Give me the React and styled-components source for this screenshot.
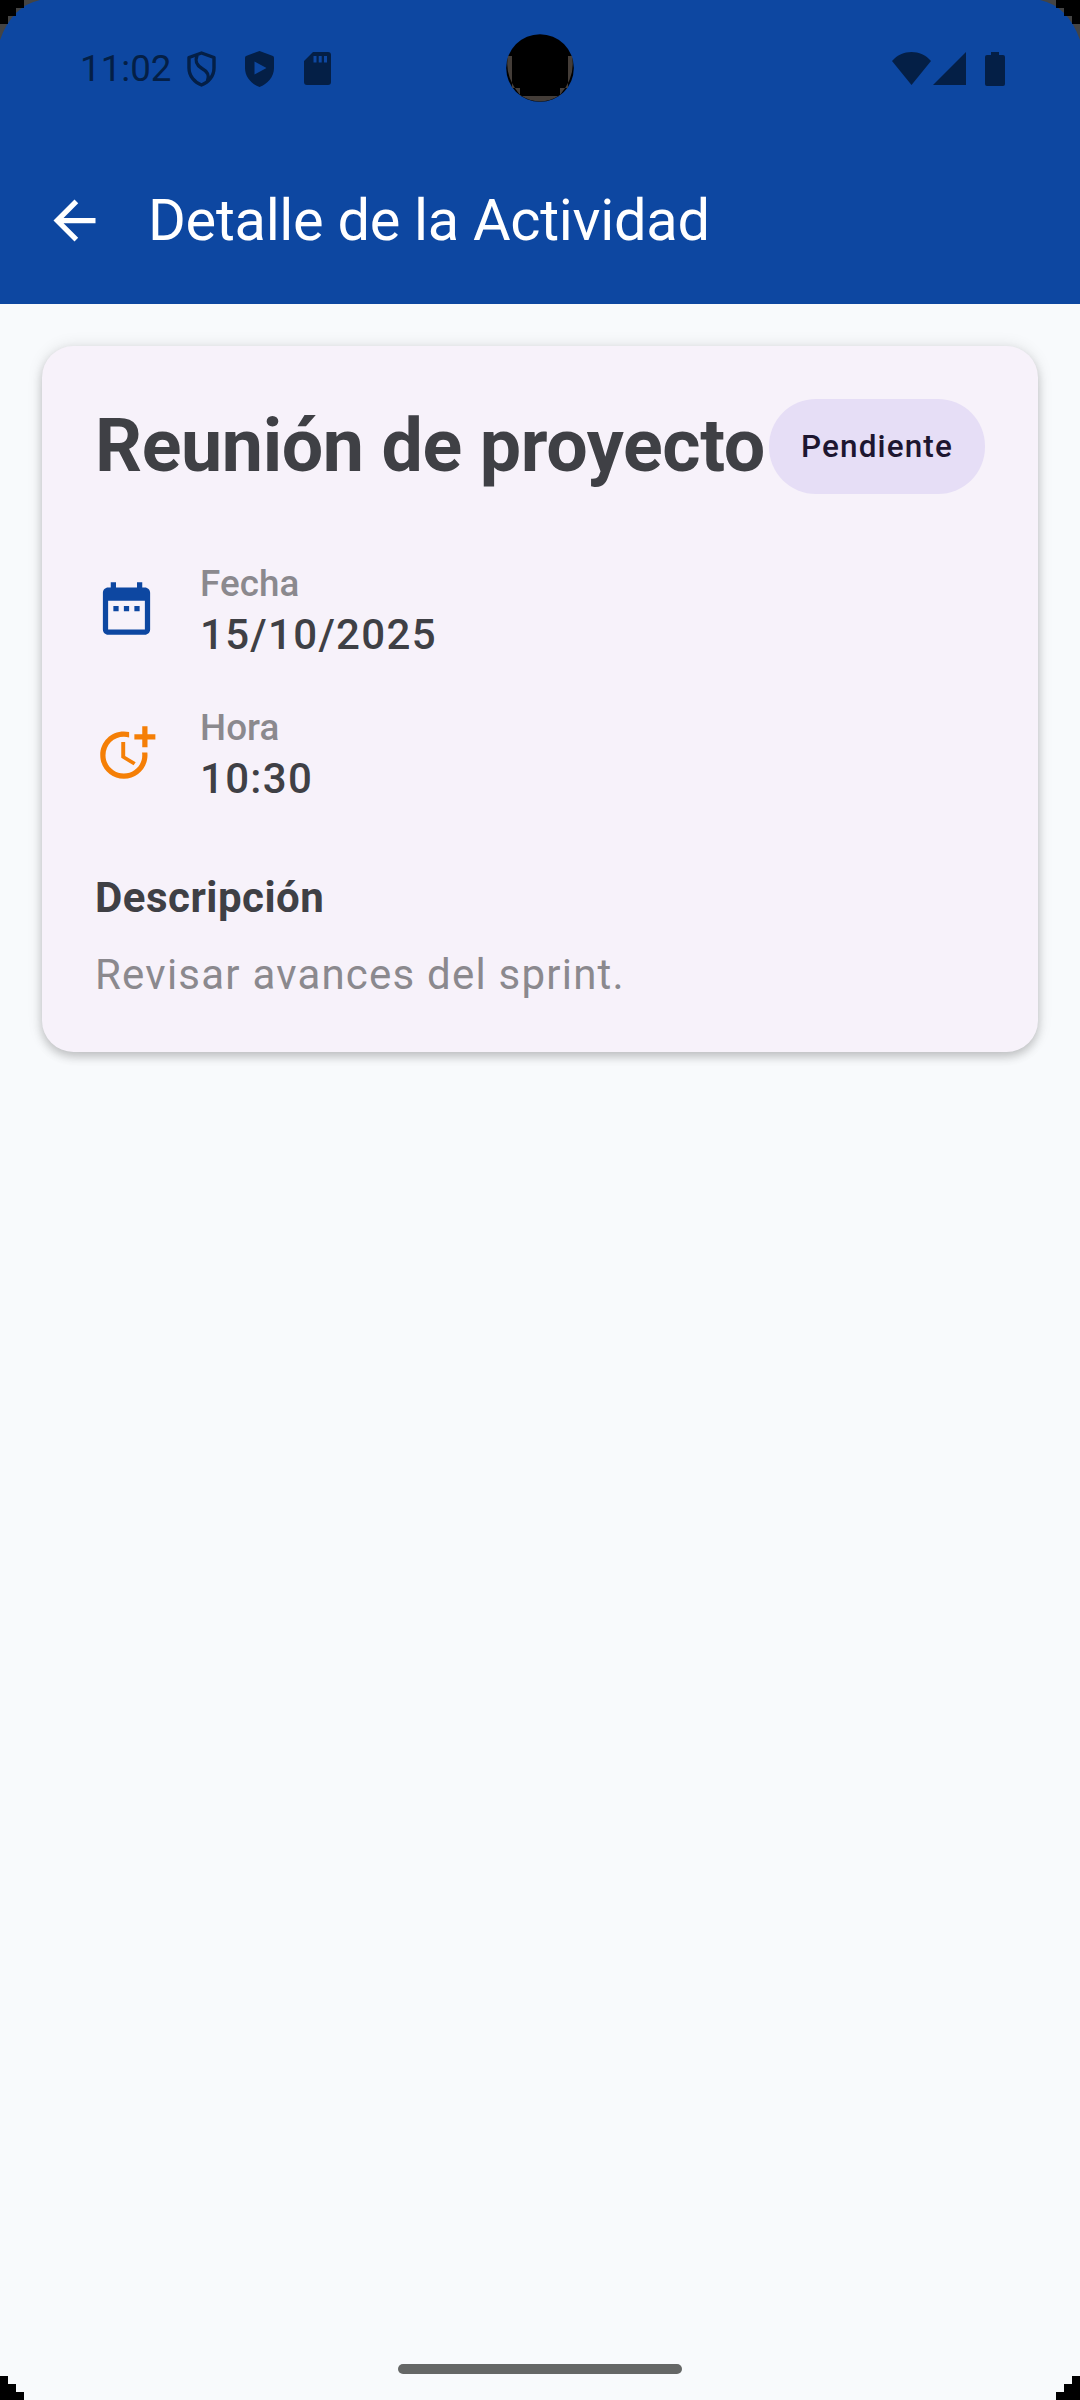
import React from "react";
import styled, { createGlobalStyle } from "styled-components";

const GlobalStyle = createGlobalStyle`
  * { box-sizing: border-box; }
  html, body { margin: 0; padding: 0; background: #f8fafc; }
  body { font-family: Roboto, "Noto Sans", sans-serif; }
  h1, h2, p { margin: 0; }
`;

const Screen = styled.div`
  position: relative;
  width: 1080px;
  height: 2400px;
  display: flex;
  flex-direction: column;
  background: #f8fafc;
  overflow: hidden;
`;

const StatusBar = styled.header`
  height: 136px;
  padding: 1px 75px 0 80px;
  display: flex;
  align-items: center;
  justify-content: space-between;
  background: #0d47a1;
  color: #041f46;
`;

const StatusGroup = styled.div`
  display: flex;
  align-items: center;
`;

const Clock = styled.span`
  width: 107px;
  font-size: 36.75px;
  line-height: 44px;
  white-space: nowrap;
`;

const StatusIcon = styled.svg`
  display: block;
  flex: none;
  margin-left: ${(p) => p.$gap || 0}px;
`;

const AppBar = styled.div`
  height: 168px;
  padding: 1px 42.5px 0;
  display: flex;
  align-items: center;
  gap: 42.5px;
  background: #0d47a1;
  color: #fff;
`;

const AppTitle = styled.h1`
  font-size: 57.75px;
  font-weight: 400;
  line-height: 73.5px;
  letter-spacing: -0.3px;
  white-space: nowrap;
`;

const Icon = styled.svg`
  display: block;
  flex: none;
  width: 63px;
  height: 63px;
  fill: ${(p) => p.$color};
`;

const Content = styled.main`
  flex: 1;
  padding: 42px;
`;

const Card = styled.section`
  height: 706px;
  padding: 52.5px 53px;
  display: flex;
  flex-direction: column;
  border-radius: 31.5px;
  background: #f7f2fa;
  box-shadow: 0 5px 10px rgba(0, 0, 0, 0.19), 0 0 16px rgba(0, 0, 0, 0.1);
`;

const CardHeader = styled.div`
  display: flex;
  align-items: center;
  justify-content: space-between;
  margin-bottom: 64px;
`;

const CardTitle = styled.h2`
  font-size: 73.5px;
  font-weight: 700;
  line-height: 94.5px;
  letter-spacing: -0.37px;
  color: #3f4045;
  white-space: nowrap;
`;

const Chip = styled.span`
  flex: none;
  width: 216px;
  height: 95px;
  display: flex;
  align-items: center;
  justify-content: center;
  border-radius: 47px;
  background: #e6def6;
  color: #1d1630;
  font-size: 31.5px;
  font-weight: 500;
  letter-spacing: 1.1px;
`;

const MetaRow = styled.div`
  display: flex;
  align-items: center;
  gap: 42px;
  height: 102px;
  margin-bottom: 42px;
`;

const MetaText = styled.div`
  display: flex;
  flex-direction: column;
`;

const MetaLabel = styled.span`
  font-size: 36.75px;
  font-weight: 500;
  line-height: 51px;
  letter-spacing: 0.1px;
  color: #8b898e;
`;

const MetaValue = styled.span`
  font-size: 42px;
  font-weight: 500;
  line-height: 51px;
  letter-spacing: 1.31px;
  color: #3f4045;
`;

const SectionTitle = styled.h2`
  margin: 20px 0 14px;
  font-size: 42px;
  font-weight: 700;
  line-height: 63px;
  letter-spacing: 0.5px;
  color: #3f4045;
`;

const Description = styled.p`
  font-size: 42px;
  line-height: 63px;
  letter-spacing: 1.22px;
  color: #8b898e;
`;

const NavBar = styled.footer`
  height: 63px;
  padding-top: 27px;
  display: flex;
  justify-content: center;
  align-items: flex-start;
`;

const NavHandle = styled.div`
  width: 284px;
  height: 10px;
  border-radius: 5px;
  background: #656766;
`;

const Bezel = styled.svg`
  position: absolute;
  top: ${(p) => (p.$bottom ? "auto" : "0")};
  bottom: ${(p) => (p.$bottom ? "0" : "auto")};
  left: ${(p) => (p.$right ? "auto" : "0")};
  right: ${(p) => (p.$right ? "0" : "auto")};
  transform: ${(p) => (p.$right ? "scaleX(-1)" : "none")};
`;

const Camera = styled.svg`
  position: absolute;
  top: 34px;
  left: 506px;
`;

function TopCorner({ right }) {
  return (
    <Bezel $right={right} width="42" height="42" viewBox="0 0 42 42">
      <path d="M0 0H40Q12 6 0 40Z" fill="#444444" />
      <path d="M0 0H24V8H16V16H8V24H0Z" fill="#000" />
    </Bezel>
  );
}

function BottomCorner({ right }) {
  return (
    <Bezel $bottom $right={right} width="24" height="24" viewBox="0 0 24 24">
      <path d="M0 0H8V8H16V16H24V24H0Z" fill="#000" />
    </Bezel>
  );
}

function Meta({ color, label, value, children }) {
  return (
    <MetaRow>
      <Icon viewBox="0 0 24 24" $color={color}>{children}</Icon>
      <MetaText>
        <MetaLabel>{label}</MetaLabel>
        <MetaValue>{value}</MetaValue>
      </MetaText>
    </MetaRow>
  );
}

export default function App() {
  return (
    <>
      <GlobalStyle />
      <Screen>
        <StatusBar>
          <StatusGroup>
            <Clock>11:02</Clock>
            <StatusIcon width="29" height="36" viewBox="0 0 29 36" fill="none" stroke="currentColor" strokeWidth="3.4" strokeLinejoin="round">
              <path d="M14.5 2L27 6.5V17C27 25 21.5 31.5 14.5 34C7.500 31.500 2 25 2 17V6.500Z" />
              <path d="M10 4.500C7.500 11 10 14.500 15 17.500C21.500 21 22.500 24.500 20.500 30" />
            </StatusIcon>
            <StatusIcon $gap={29} width="29" height="36" viewBox="0 0 29 36" fill="currentColor">
              <path fillRule="evenodd" d="M14.500 0L28 5Q29 5.500 29 7V17C29 26 22.500 33 14.500 36C6.500 33 0 26 0 17V7Q0 5.500 1 5ZM9.500 10.500V23.500L21.500 17Z" />
            </StatusIcon>
            <StatusIcon $gap={30} width="27" height="33" viewBox="0 0 27 33" fill="currentColor">
              <path fillRule="evenodd" d="M9 0H24Q27 0 27 3V30Q27 33 24 33H3Q0 33 0 30V9ZM9.500 4V10.500H12.500V4ZM14.700 4V10.500H17.700V4ZM20 4V10.500H23V4Z" />
            </StatusIcon>
          </StatusGroup>
          <StatusGroup>
            <StatusIcon width="39" height="33" viewBox="0 0 39 33" fill="currentColor">
              <path d="M0 9C10-3 29-3 39 9L19.500 33Z" />
            </StatusIcon>
            <StatusIcon $gap={2} width="33" height="33" viewBox="0 0 33 33" fill="currentColor">
              <path d="M33 0V33H0Z" />
            </StatusIcon>
            <StatusIcon $gap={19} width="20" height="34" viewBox="0 0 20 34" fill="currentColor">
              <path d="M6 0H14V3H18Q20 3 20 5V32Q20 34 18 34H2Q0 34 0 32V5Q0 3 2 3H6Z" />
            </StatusIcon>
          </StatusGroup>
        </StatusBar>

        <AppBar>
          <Icon viewBox="0 0 24 24" $color="#fff">
            <path d="M20 11H7.830l5.590-5.590L12 4l-8 8 8 8 1.410-1.410L7.830 13H20v-2z" />
          </Icon>
          <AppTitle>Detalle de la Actividad</AppTitle>
        </AppBar>

        <Content>
          <Card>
            <CardHeader>
              <CardTitle>Reunión de proyecto</CardTitle>
              <Chip>Pendiente</Chip>
            </CardHeader>
            <Meta color="#0d47a1" label="Fecha" value="15/10/2025">
              <path d="M9 11H7v2h2v-2zm4 0h-2v2h2v-2zm4 0h-2v2h2v-2zm2-7h-1V2h-2v2H8V2H6v2H5c-1.110 0-1.990.9-1.990 2L3 20c0 1.100.890 2 2 2h14c1.100 0 2-.9 2-2V6c0-1.100-.9-2-2-2zm0 16H5V9h14v11z" />
            </Meta>
            <Meta color="#f57f06" label="Hora" value="10:30">
              <path d="M10 8v6l4.700 2.900.8-1.200-4-2.400V8z" />
              <path d="M17.920 12c.05.330.08.660.08 1 0 3.900-3.100 7-7 7s-7-3.100-7-7 3.100-7 7-7c.7 0 1.370.1 2 .290V4.230C12.360 4.080 11.690 4 11 4c-5 0-9 4-9 9s4 9 9 9 9-4 9-9c0-.340-.020-.670-.060-1z" />
              <path d="M20 5V2h-2v3h-3v2h3v3h2V7h3V5z" />
            </Meta>
            <SectionTitle>Descripción</SectionTitle>
            <Description>Revisar avances del sprint.</Description>
          </Card>
        </Content>

        <NavBar>
          <NavHandle />
        </NavBar>

        <Camera width="68" height="68" viewBox="0 0 68 68">
          <circle cx="34" cy="34" r="33.800" fill="#000" />
          <path d="M62 22H66Q70 42 54 61Q34 74 14 61Q-2 42 2 22H6V54H14V62H54V54H62Z" fill="#443d38" />
        </Camera>
        <TopCorner />
        <TopCorner right />
        <BottomCorner />
        <BottomCorner right />
      </Screen>
    </>
  );
}
